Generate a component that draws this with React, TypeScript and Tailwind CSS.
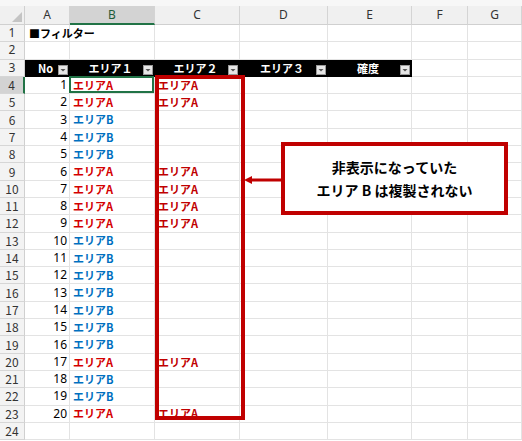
import React from 'react';

const cols = [
  { key: 'A', w: 'w-[45px]' },
  { key: 'B', w: 'w-[85px]' },
  { key: 'C', w: 'w-[85px]' },
  { key: 'D', w: 'w-[88px]' },
  { key: 'E', w: 'w-[84px]' },
  { key: 'F', w: 'w-[56px]' },
  { key: 'G', w: 'flex-1' },
];

// true = エリアA, false = エリアB
const areas = [true, true, false, false, false, true, true, true, true, false, false, false, false, false, false, false, true, false, false, true];

const FilterBtn = () => (
  <span className="absolute right-[2px] bottom-[2px] w-[10px] h-[10px] bg-[#e6e6e6] border border-[#9a9a9a] flex items-center justify-center">
    <svg width="6" height="4" viewBox="0 0 6 4">
      <path d="M0.5 1 L5.5 1 L3 3.5 Z" fill="#555" />
    </svg>
  </span>
);

const Cell = ({ w, children, className = '' }: { w: string; children?: React.ReactNode; className?: string }) => (
  <div className={`${w} shrink-0 h-full border-r border-b border-[#e3e3e3] flex items-center relative ${className}`}>
    {children}
  </div>
);

const RowHead = ({ n, selected }: { n: number; selected?: boolean }) => (
  <div
    className={`w-[25px] shrink-0 h-full flex items-center justify-center text-[12px] text-[#333] border-b border-[#d6d6d6] ${
      selected ? 'bg-[#d3d3d3] border-r-2 border-r-[#217346]' : 'bg-[#f3f3f3] border-r border-r-[#d0d0d0]'
    }`}
  >
    {n}
  </div>
);

const Area = ({ a }: { a: boolean }) => (
  <span className={`pl-[3px] font-bold ${a ? 'text-[#d40000]' : 'text-[#0070c0]'}`}>{a ? 'エリアA' : 'エリアB'}</span>
);

export default function App() {
  const rowH = 'h-[17.3px]';
  return (
    <div
      className="relative w-[522px] h-[441px] overflow-hidden bg-white text-[11px] text-black"
      style={{ fontFamily: '"Noto Sans", "Noto Sans CJK JP", sans-serif' }}
    >
      {/* column headers */}
      <div className="h-[6px] bg-[#f7f7f7]" />
      <div className="flex h-[19px] bg-[#f0f0f0] text-[12px] text-[#333]">
        <div className="w-[25px] shrink-0 border-r border-b border-[#d0d0d0] relative">
          <svg className="absolute right-[2px] bottom-[2px]" width="10" height="10" viewBox="0 0 10 10">
            <path d="M10 0 L10 10 L0 10 Z" fill="#c4c4c4" />
          </svg>
        </div>
        {cols.map((c) => (
          <div
            key={c.key}
            className={`${c.w} shrink-0 flex items-center justify-center border-r border-[#d4d4d4] ${
              c.key === 'B' ? 'bg-[#d3d3d3] border-b-2 border-b-[#217346] text-[#1f5c3a]' : 'border-b border-b-[#d0d0d0]'
            }`}
          >
            {c.key}
          </div>
        ))}
      </div>

      {/* row 1 */}
      <div className={`flex ${rowH}`}>
        <RowHead n={1} />
        <Cell w={cols[0].w}>
          <span className="pl-[4px] font-bold whitespace-nowrap" style={{ fontFamily: '"Noto Sans CJK JP", sans-serif' }}>
            ■フィルター
          </span>
        </Cell>
        {cols.slice(1).map((c) => (
          <Cell key={c.key} w={c.w} className={c.key === 'B' ? 'border-l-0' : ''} />
        ))}
      </div>

      {/* row 2 */}
      <div className={`flex ${rowH}`}>
        <RowHead n={2} />
        {cols.map((c) => (
          <Cell key={c.key} w={c.w} />
        ))}
      </div>

      {/* row 3 table header */}
      <div className={`flex ${rowH}`}>
        <RowHead n={3} />
        {['No', 'エリア１', 'エリア２', 'エリア３', '確度'].map((t, i) => (
          <div
            key={t}
            className={`${cols[i].w} shrink-0 h-full bg-black text-white font-bold flex items-center justify-center relative text-[11px]`}
            style={{ fontFamily: '"Noto Sans CJK JP", sans-serif' }}
          >
            <span className="pr-[4px]">{t}</span>
            <FilterBtn />
          </div>
        ))}
        <Cell w={cols[5].w} />
        <Cell w={cols[6].w} />
      </div>

      {/* data rows */}
      <div style={{ fontFamily: '"Noto Sans CJK JP", sans-serif' }}>
        {areas.map((a, i) => (
          <div key={i} className={`flex ${rowH}`}>
            <RowHead n={i + 4} selected={i === 0} />
            <Cell w={cols[0].w} className="justify-end pr-[2px] text-[12px]">
              <span style={{ fontFamily: '"Noto Sans", sans-serif' }}>{i + 1}</span>
            </Cell>
            <Cell w={cols[1].w}>
              <Area a={a} />
              {i === 0 && <div className="absolute -left-px -top-px right-0 bottom-0 border-2 border-[#217346]" />}
            </Cell>
            <Cell w={cols[2].w}>{a && <span className="pl-[3px] font-bold text-[#c00000]">エリアA</span>}</Cell>
            {cols.slice(3).map((c) => (
              <Cell key={c.key} w={c.w} />
            ))}
          </div>
        ))}
        <div className={`flex ${rowH}`}>
          <RowHead n={24} />
          {cols.map((c) => (
            <Cell key={c.key} w={c.w} />
          ))}
        </div>
      </div>

      {/* red frame around column C */}
      <div className="absolute left-[155px] top-[75px] w-[90px] h-[345px] border-[4px] border-[#c00000] pointer-events-none" />

      {/* arrow */}
      <svg className="absolute left-[244px] top-[175px]" width="40" height="10" viewBox="0 0 40 10">
        <path d="M7 5 L40 5" stroke="#c00000" strokeWidth="3" />
        <path d="M0 5 L8 1 L8 9 Z" fill="#c00000" />
      </svg>

      {/* callout */}
      <div
        className="absolute left-[281px] top-[142px] w-[227px] h-[73px] border-[4px] border-[#c00000] bg-white flex flex-col items-center justify-center gap-[9px] font-bold text-[14px] leading-none"
        style={{ fontFamily: '"Noto Sans CJK JP", sans-serif' }}
      >
        <span>非表示になっていた</span>
        <span>エリア B は複製されない</span>
      </div>
    </div>
  );
}
